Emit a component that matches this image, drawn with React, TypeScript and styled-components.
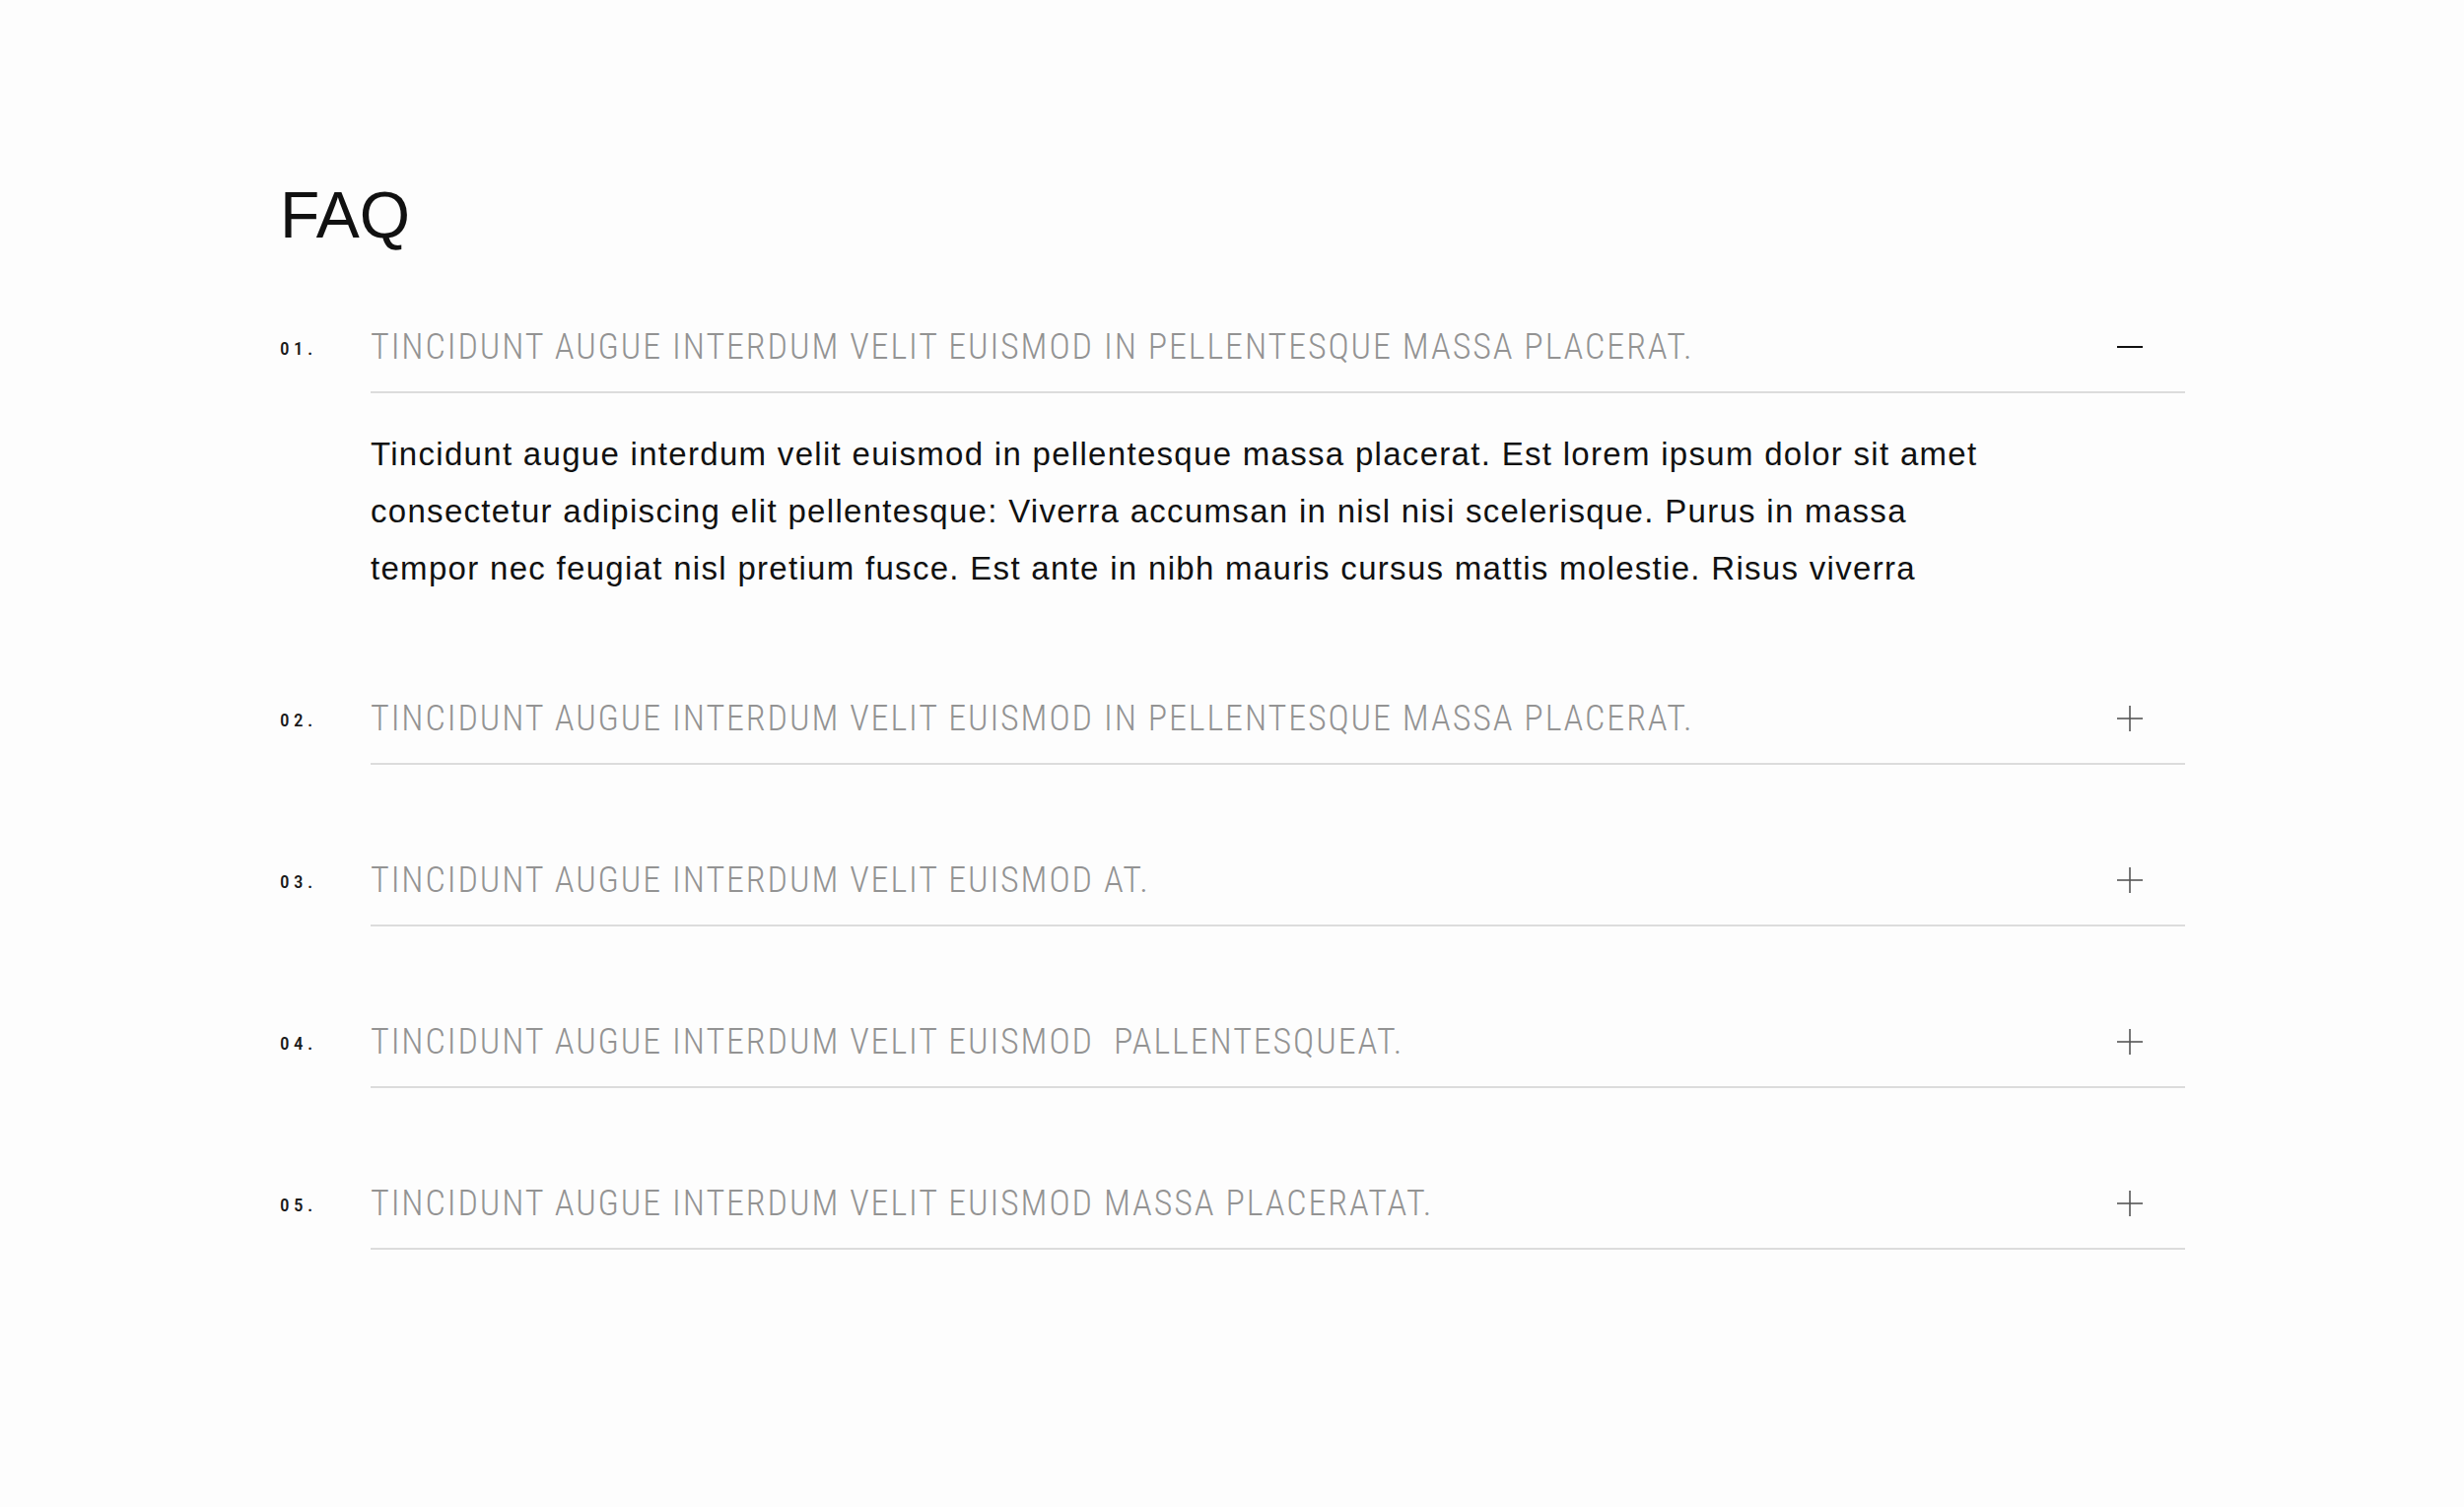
import React from "react";
import styled, { createGlobalStyle } from "styled-components";

const GlobalStyle = createGlobalStyle`
  html, body {
    margin: 0;
    padding: 0;
    background: #fdfdfd;
  }
`;

type Item = { q: string; a?: string; open?: boolean };

const items: Item[] = [
  {
    q: "Tincidunt augue interdum velit euismod in pellentesque massa placerat.",
    a: "Tincidunt augue interdum velit euismod in pellentesque massa placerat. Est lorem ipsum dolor sit amet consectetur adipiscing elit pellentesque: Viverra accumsan in nisl nisi scelerisque. Purus in massa tempor nec feugiat nisl pretium fusce. Est ante in nibh mauris cursus mattis molestie. Risus viverra",
    open: true,
  },
  { q: "Tincidunt augue interdum velit euismod in pellentesque massa placerat." },
  { q: "Tincidunt augue interdum velit euismod at." },
  { q: "Tincidunt augue interdum velit euismod  pallentesqueat." },
  { q: "Tincidunt augue interdum velit euismod massa placeratat." },
];

export default function App() {
  return (
    <Page>
      <GlobalStyle />
      <Title>FAQ</Title>
      <List>
        {items.map((item, i) => (
          <Entry key={i}>
            <Num>{String(i + 1).padStart(2, "0")}.</Num>
            <Body>
              <Header>
                <Question>{item.q}</Question>
                <Toggle $open={!!item.open}>
                  <svg width="28" height="28" viewBox="0 0 28 28">
                    <line x1="1" y1="14" x2="27" y2="14" stroke="currentColor" strokeWidth={item.open ? 2 : 1.6} />
                    {!item.open && (
                      <line x1="14" y1="1" x2="14" y2="27" stroke="currentColor" strokeWidth="1.6" />
                    )}
                  </svg>
                </Toggle>
              </Header>
              {item.open && <Answer>{item.a}</Answer>}
            </Body>
          </Entry>
        ))}
      </List>
    </Page>
  );
}

const Page = styled.div`
  padding: 185px 283px 120px 284px;
  min-height: 1529px;
  box-sizing: border-box;
`;

const Title = styled.h1`
  margin: 0;
  font-family: "Liberation Sans", Arial, sans-serif;
  font-weight: 400;
  font-size: 66px;
  line-height: 1;
  color: #111;
`;

const List = styled.div`
  display: flex;
  flex-direction: column;
  gap: 72px;
  margin-top: 56px;
`;

const Entry = styled.div`
  display: grid;
  grid-template-columns: 92px 1fr;
`;

const Num = styled.span`
  height: 92px;
  display: flex;
  align-items: center;
  font-family: "Roboto Condensed", "Roboto", sans-serif;
  font-size: 19px;
  font-weight: 500;
  letter-spacing: 4.5px;
  color: #1a1a1a;
`;

const Body = styled.div`
  display: flex;
  flex-direction: column;
`;

const Header = styled.div`
  height: 90px;
  display: flex;
  align-items: center;
  justify-content: space-between;
  border-bottom: 2px solid #dcdcdc;
  padding-right: 42px;
`;

const Question = styled.span`
  font-family: "Roboto Condensed", "Roboto", sans-serif;
  font-size: 36px;
  font-weight: 300;
  letter-spacing: 1.9px;
  text-transform: uppercase;
  color: #939393;
  white-space: pre;
`;

const Toggle = styled.span<{ $open: boolean }>`
  display: flex;
  color: ${(p) => (p.$open ? "#111" : "#555")};
`;

const Answer = styled.p`
  margin: 0;
  padding: 33px 0 6px;
  max-width: 1655px;
  font-family: "Liberation Sans", Arial, sans-serif;
  font-size: 33px;
  letter-spacing: 1.3px;
  line-height: 58px;
  color: #111;
`;
